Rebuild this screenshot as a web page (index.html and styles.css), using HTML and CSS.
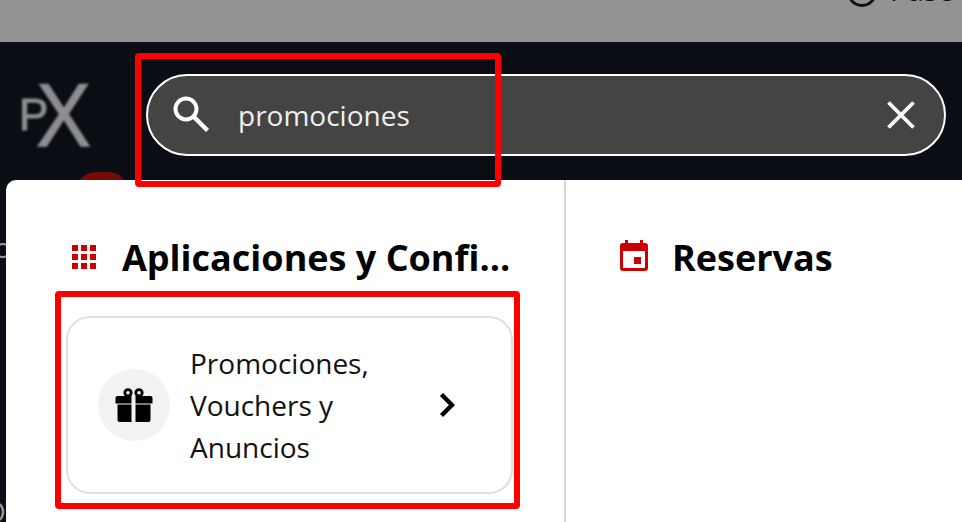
FILE: index.html
```html
<!DOCTYPE html>
<html lang="es">
<head>
  <meta charset="UTF-8">
  <meta name="viewport" content="width=device-width, initial-scale=1.0">
  <title>Buscador de promociones</title>
  <link rel="stylesheet" href="styles.css">
</head>
<body>
  <div class="top-strip">
    <div class="pass-link">
      <svg class="pass-icon" viewBox="0 0 32 32"><circle cx="16" cy="16" r="13.5" fill="none" stroke="#111" stroke-width="3"/></svg>
      <span class="pass-text">Pase</span>
    </div>
  </div>

  <header class="search-header">
    <div class="logo"><span class="logo-p">P</span><span class="logo-x">X</span></div>
    <div class="search-box">
      <svg class="search-icon" viewBox="0 0 38 38"><circle cx="14" cy="14" r="10.5" fill="none" stroke="#fff" stroke-width="4"/><path d="M21.5 21.5 L35.5 35.5" stroke="#fff" stroke-width="4.4" fill="none"/></svg>
      <div class="search-text">promociones</div>
      <svg class="clear-icon" viewBox="0 0 28 28"><path d="M1.5 1.5 L26.5 26.5 M26.5 1.5 L1.5 26.5" stroke="#fff" stroke-width="3.8" fill="none"/></svg>
    </div>
    <div class="red-badge"></div>
  </header>

  <main class="main-area">
    <div class="side-strip">
      <span class="side-c">c</span>
      <span class="side-o">O</span>
    </div>
    <div class="results-panel">
      <section class="result-col col-apps">
        <h2 class="col-title">
          <svg class="title-icon grid-icon" viewBox="0 0 24 24" fill="#cc0000">
            <rect x="0" y="0" width="6" height="6"/><rect x="9" y="0" width="6" height="6"/><rect x="18" y="0" width="6" height="6"/>
            <rect x="0" y="9" width="6" height="6"/><rect x="9" y="9" width="6" height="6"/><rect x="18" y="9" width="6" height="6"/>
            <rect x="0" y="18" width="6" height="6"/><rect x="9" y="18" width="6" height="6"/><rect x="18" y="18" width="6" height="6"/>
          </svg>
          <span class="title-text">Aplicaciones y Configuración</span>
        </h2>
        <div class="result-card">
          <div class="card-icon">
            <svg class="gift-icon" viewBox="0 0 38 34">
              <path d="M2.5 8 H35.5 Q37.5 8 37.5 10 V15.5 H20.5 V8 H16.5 V15.5 H0.5 V10 Q0.5 8 2.5 8 Z" fill="#000"/>
              <path d="M2.5 16.5 H16.5 V34 H4.5 Q2.5 34 2.5 32 Z M20.5 16.5 H35.5 V32 Q35.5 34 33.5 34 H20.5 Z" fill="#000"/>
              <circle cx="13" cy="4.8" r="3.2" fill="none" stroke="#000" stroke-width="2.8"/>
              <circle cx="24" cy="4.8" r="3.2" fill="none" stroke="#000" stroke-width="2.8"/>
            </svg>
          </div>
          <div class="card-label">Promociones, Vouchers y Anuncios</div>
          <svg class="chevron" viewBox="0 0 16 26"><path d="M2.5 2.5 L13 13 L2.5 23.5" fill="none" stroke="#000" stroke-width="4.4"/></svg>
        </div>
      </section>
      <section class="result-col col-bookings">
        <h2 class="col-title">
          <svg class="title-icon calendar-icon" viewBox="0 0 28 31" fill="#cc0000">
            <path fill-rule="evenodd" d="M5 0 H8 V3 H20 V0 H23 V3 H25 Q28 3 28 6 V28 Q28 31 25 31 H3 Q0 31 0 28 V6 Q0 3 3 3 H5 Z M3 11 V28 H25 V11 Z"/>
            <rect x="14" y="17" width="7" height="7"/>
          </svg>
          <span class="title-text">Reservas</span>
        </h2>
      </section>
    </div>
  </main>

  <div class="highlight highlight-search"></div>
  <div class="highlight highlight-card"></div>
</body>
</html>
```

FILE: styles.css
```css
* {
  margin: 0;
  padding: 0;
  box-sizing: border-box;
}

body {
  width: 962px;
  height: 522px;
  overflow: hidden;
  position: relative;
  background-color: #0a0e14;
  font-family: 'Open Sans', 'Noto Sans', sans-serif;
  color: #000;
}

.top-strip {
  height: 42px;
  background-color: #939393;
  display: flex;
  justify-content: flex-end;
  overflow: hidden;
}

.pass-link {
  display: flex;
  align-items: center;
  gap: 12px;
  width: 116px;
  height: 32px;
  margin-top: -24px;
  flex-shrink: 0;
}

.pass-text {
  font-size: 29px;
  line-height: 32px;
  color: #111;
  margin-top: -5px;
}

.pass-icon {
  width: 32px;
  height: 32px;
  flex-shrink: 0;
}

.search-header {
  height: 138px;
  background-color: #0a0e14;
  display: flex;
  align-items: flex-start;
  padding: 32px 16px 0 19px;
  position: relative;
}

.logo {
  width: 127px;
  height: 82px;
  color: #8e8e8e;
  display: flex;
  align-items: center;
  filter: blur(0.8px);
  font-family: 'Liberation Sans', sans-serif;
}

.logo-p {
  font-size: 44px;
  line-height: 1;
  -webkit-text-stroke: 1px #8e8e8e;
}

.logo-x {
  font-size: 82px;
  line-height: 1;
  margin-left: -12px;
  transform: translateY(1px) scaleY(1.08);
  -webkit-text-stroke: 1.2px #8e8e8e;
}

.search-box {
  flex-grow: 1;
  height: 82px;
  background-color: #444;
  border: 2px solid #fff;
  border-radius: 41px;
  display: flex;
  align-items: center;
  padding: 0 29px 0 24px;
}

.search-icon {
  width: 38px;
  height: 38px;
  flex-shrink: 0;
  margin-top: -2px;
}

.search-text {
  flex-grow: 1;
  margin-left: 28px;
  font-size: 28px;
  color: #eee;
}

.clear-icon {
  width: 28px;
  height: 28px;
  flex-shrink: 0;
}

.red-badge {
  position: absolute;
  left: 76px;
  top: 130px;
  width: 52px;
  height: 40px;
  border-radius: 20px;
  background-color: #7a0a05;
}

.main-area {
  display: flex;
  height: 342px;
  position: relative;
}

.side-strip {
  width: 6px;
  flex-shrink: 0;
  overflow: hidden;
  position: relative;
  color: #999;
  font-size: 28px;
}

.side-c {
  position: absolute;
  left: -6px;
  top: 48px;
}

.side-o {
  position: absolute;
  left: -16px;
  top: 312px;
}

.results-panel {
  flex-grow: 1;
  background-color: #fff;
  border-radius: 10px 0 0 0;
  display: flex;
}

.result-col {
  padding: 55px 0 0 60px;
}

.col-apps {
  width: 560px;
  border-right: 2px solid #d6d6d6;
}

.col-bookings {
  flex-grow: 1;
  padding-left: 54px;
}

.col-title {
  display: flex;
  align-items: center;
  font-size: 36px;
  font-weight: 700;
  height: 44px;
}

.title-icon {
  flex-shrink: 0;
}

.grid-icon {
  width: 24px;
  height: 24px;
  margin: 0 26px 0 6px;
}

.calendar-icon {
  width: 28px;
  height: 31px;
  margin-right: 24px;
  margin-top: -3px;
}

.title-text {
  white-space: nowrap;
  overflow: hidden;
  text-overflow: ellipsis;
}

.col-apps .title-text {
  width: 392px;
}

.result-card {
  width: 447px;
  height: 178px;
  margin-top: 37px;
  border: 2px solid #e0e0e0;
  border-radius: 24px;
  display: flex;
  align-items: center;
  padding: 0 56px 0 30px;
}

.card-icon {
  width: 72px;
  height: 72px;
  border-radius: 50%;
  background-color: #f2f2f2;
  display: flex;
  align-items: center;
  justify-content: center;
  flex-shrink: 0;
}

.gift-icon {
  width: 38px;
  height: 34px;
}

.card-label {
  width: 226px;
  margin-left: 20px;
  font-size: 28px;
  line-height: 42px;
  color: #111;
}

.chevron {
  width: 16px;
  height: 26px;
  margin-left: auto;
  flex-shrink: 0;
}

.highlight {
  position: absolute;
  border: 6px solid #ff0000;
  border-radius: 4px;
  pointer-events: none;
}

.highlight-search {
  left: 135px;
  top: 53px;
  width: 366px;
  height: 134px;
}

.highlight-card {
  left: 55px;
  top: 291px;
  width: 465px;
  height: 218px;
}
```
